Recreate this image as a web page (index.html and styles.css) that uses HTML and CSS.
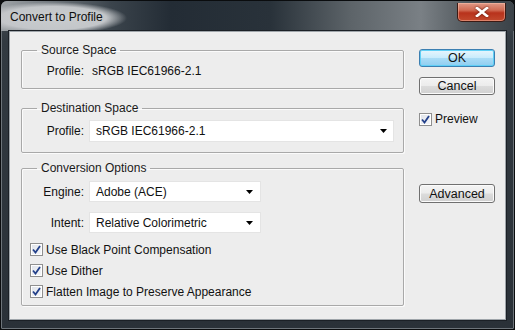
FILE: index.html
```html
<!DOCTYPE html>
<html lang="en-US">
  <head>
    <title>Convert to Profile</title>
    <meta name="viewport" content="width=device-width, initial-scale=1" />
    <link rel="stylesheet" href="styles.css">
  </head>
  <body>
    <div class="window">
      <div class="titlebar">
        <span class="title">Convert to Profile</span>
        <span class="close">
          <svg width="14" height="10" viewBox="0 0 14 10">
            <path d="M2 1 L12 9 M12 1 L2 9" stroke="#fff" stroke-width="2.6" stroke-linecap="square" />
          </svg>
        </span>
      </div>
      <div class="client">
        <div class="groups">
          <fieldset class="group source">
            <legend>Source Space</legend>
            <div class="row">
              <span class="label">Profile:</span>
              <span class="value">sRGB IEC61966-2.1</span>
            </div>
          </fieldset>
          <fieldset class="group dest">
            <legend>Destination Space</legend>
            <div class="row">
              <span class="label">Profile:</span>
              <div class="select wide">
                <span>sRGB IEC61966-2.1</span>
                <svg class="arrow" width="7" height="4" viewBox="0 0 7 4"><path d="M0 0 H7 L3.5 4 Z" fill="#000" /></svg>
              </div>
            </div>
          </fieldset>
          <fieldset class="group options">
            <legend>Conversion Options</legend>
            <div class="row">
              <span class="label">Engine:</span>
              <div class="select">
                <span>Adobe (ACE)</span>
                <svg class="arrow" width="7" height="4" viewBox="0 0 7 4"><path d="M0 0 H7 L3.5 4 Z" fill="#000" /></svg>
              </div>
            </div>
            <div class="row gap">
              <span class="label">Intent:</span>
              <div class="select">
                <span>Relative Colorimetric</span>
                <svg class="arrow" width="7" height="4" viewBox="0 0 7 4"><path d="M0 0 H7 L3.5 4 Z" fill="#000" /></svg>
              </div>
            </div>
            <div class="checks">
              <label class="check"><span class="box"><svg width="9" height="9" viewBox="0 0 9 9"><path d="M1 4.5 L3.5 7.5 L8 1" fill="none" stroke="#23408a" stroke-width="1.8" /></svg></span>Use Black Point Compensation</label>
              <label class="check"><span class="box"><svg width="9" height="9" viewBox="0 0 9 9"><path d="M1 4.5 L3.5 7.5 L8 1" fill="none" stroke="#23408a" stroke-width="1.8" /></svg></span>Use Dither</label>
              <label class="check"><span class="box"><svg width="9" height="9" viewBox="0 0 9 9"><path d="M1 4.5 L3.5 7.5 L8 1" fill="none" stroke="#23408a" stroke-width="1.8" /></svg></span>Flatten Image to Preserve Appearance</label>
            </div>
          </fieldset>
        </div>
        <div class="actions">
          <button class="btn default">OK</button>
          <button class="btn cancel">Cancel</button>
          <label class="check preview"><span class="box"><svg width="9" height="9" viewBox="0 0 9 9"><path d="M1 4.5 L3.5 7.5 L8 1" fill="none" stroke="#23408a" stroke-width="1.8" /></svg></span>Preview</label>
          <button class="btn advanced">Advanced</button>
        </div>
      </div>
    </div>
  </body>
</html>
```

FILE: styles.css
```css
body {
  margin: 0;
  background: #0d0f11;
  font-family: "Liberation Sans", Arial, sans-serif;
  font-size: 12px;
  color: #111;
}
.window {
  width: 515px;
  height: 330px;
  box-sizing: border-box;
  padding: 0 8px 9px 8px;
  border: 1px solid #0a0c0e;
  border-radius: 7px 7px 2px 2px;
  background: linear-gradient(180deg, #4a5259 0, #323a41 40px, #2a3138 100%);
  box-shadow: inset 0 0 0 1px #6d747a;
  display: flex;
  flex-direction: column;
}
.titlebar {
  height: 30px;
  margin: 0 -8px;
  padding: 0 8px 0 9px;
  display: flex;
  align-items: flex-start;
  justify-content: space-between;
  border-radius: 6px 6px 0 0;
  background:
    radial-gradient(ellipse 74px 16px at 52px 17px, #c9ccce 0, #c3c6c9 72%, rgba(195, 198, 201, 0) 100%),
    linear-gradient(90deg, #9ea3a7 0, #3b444c 110px, #232c35 170px, #29323a 270px, #5d6469 350px, #7a8085 420px, #50575c 470px, #3a4147 515px);
}
.title {
  margin-top: 9px;
  color: #0e0e0e;
  font-size: 12px;
}
.close {
  width: 47px;
  height: 18px;
  margin-top: 2px;
  display: flex;
  align-items: center;
  justify-content: center;
  border: 1px solid #3b1a14;
  border-top: 0;
  border-radius: 0 0 5px 5px;
  background: linear-gradient(180deg, #e09a88 0, #d06a52 40%, #b8321c 55%, #c24a2e 100%);
  box-shadow: inset 0 0 0 1px rgba(255, 200, 180, 0.45);
}
.close svg {
  filter: drop-shadow(0 0 1px #5a1408);
}
.client {
  flex: 1;
  display: flex;
  gap: 15px;
  padding: 11px 0 0 11px;
  background: #ededed;
  border: 1px solid #9fa5aa;
  box-shadow: 0 0 0 1px #1b2026;
}
.groups {
  width: 383px;
  display: flex;
  flex-direction: column;
}
.group {
  margin: 0;
  padding: 0;
  border: 1px solid #a9a9a9;
  border-radius: 2px;
  box-shadow: inset 1px 1px 0 #fbfbfb, 1px 1px 0 #fbfbfb;
  min-width: 0;
}
.group legend {
  margin-left: 15px;
  padding: 0 4px;
  line-height: 14px;
  font-size: 12px;
  color: #1a1a1a;
}
.source {
  padding: 6px 0 9px 0;
}
.dest {
  margin-top: 12px;
  padding: 5px 0 10px 0;
}
.options {
  margin-top: 8px;
  padding: 6px 0 3px 0;
}
.row {
  display: flex;
  align-items: center;
  gap: 5px;
  min-height: 16px;
}
.row.gap {
  margin-top: 10px;
}
.label {
  width: 62px;
  text-align: right;
}
.value {
  padding-left: 3px;
}
.select {
  width: 172px;
  height: 21px;
  box-sizing: border-box;
  padding: 0 7px 0 6px;
  display: flex;
  align-items: center;
  justify-content: space-between;
  background: #fff;
  border: 1px solid #e4e4e4;
}
.select.wide {
  width: 305px;
  height: 22px;
  padding-right: 6px;
}
.checks {
  margin-top: 6px;
  display: flex;
  flex-direction: column;
}
.check {
  height: 21px;
  padding-left: 8px;
  display: flex;
  align-items: center;
  gap: 3px;
}
.box {
  width: 13px;
  height: 13px;
  box-sizing: border-box;
  display: flex;
  align-items: center;
  justify-content: center;
  border: 1px solid #8f8f8f;
  background: linear-gradient(135deg, #dfe3ea 0, #f6f7f9 100%);
  box-shadow: inset 0 0 0 1px #fff;
}
.actions {
  width: 76px;
  display: flex;
  flex-direction: column;
  padding-top: 6px;
}
.btn {
  height: 18px;
  padding: 0;
  font-family: inherit;
  font-size: 12.5px;
  color: #111;
  border: 1px solid #707070;
  border-radius: 3px;
  background: linear-gradient(180deg, #f4f4f4 0, #ececec 48%, #dcdcdc 52%, #d0d0d0 100%);
  box-shadow: inset 0 0 0 1px #fbfbfb;
  line-height: 14px;
}
.btn.default {
  border-color: #3c7fb1;
  background: linear-gradient(180deg, #e8f6fd 0, #c9ecfc 48%, #a9dcf6 52%, #8fcdf0 100%);
  box-shadow: inset 0 0 0 1px #5fd0f6;
}
.btn.cancel {
  margin-top: 10px;
}
.check.preview {
  padding-left: 0;
  margin-top: 14px;
  height: 20px;
}
.btn.advanced {
  margin-top: 55px;
  height: 19px;
}
```
